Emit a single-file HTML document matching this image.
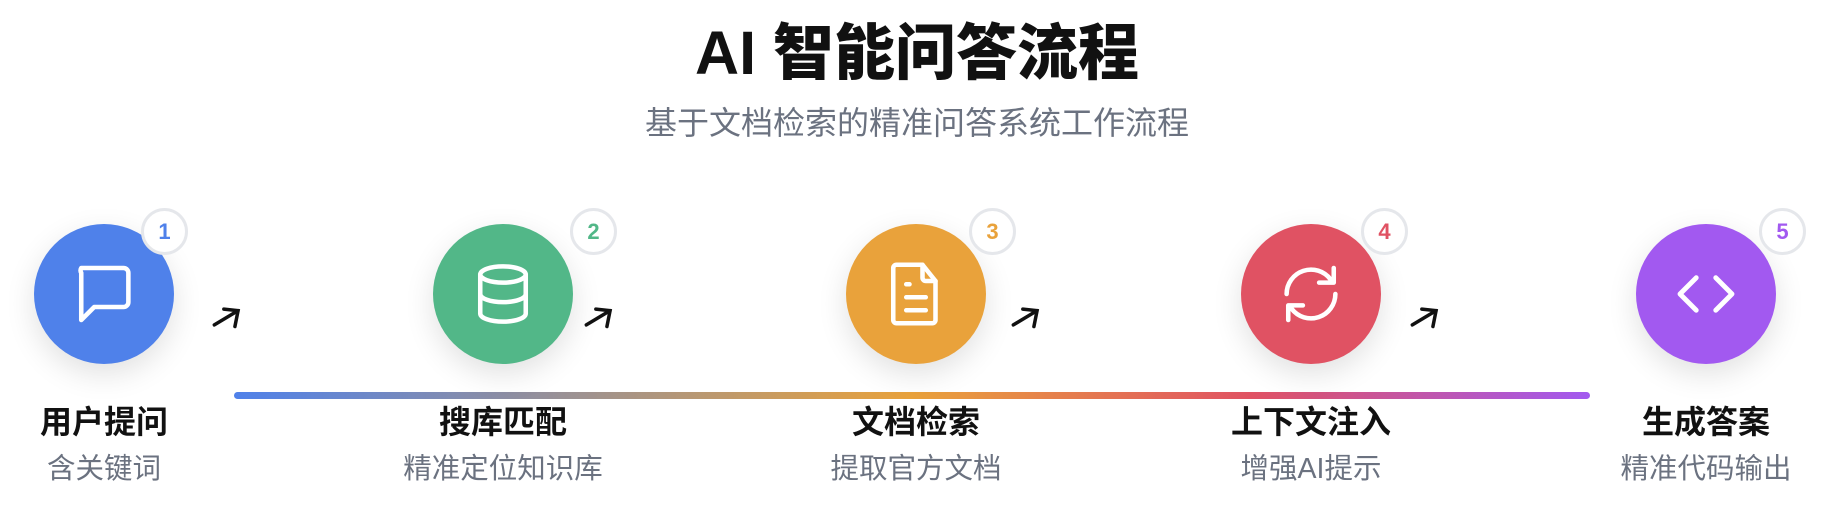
<!DOCTYPE html>
<html><head><meta charset="utf-8"><style>
body{margin:0;width:1834px;height:524px;background:#fff;position:relative;overflow:hidden;font-family:"Liberation Sans","Noto Sans CJK SC",sans-serif}
.t{position:absolute;left:0;width:1834px;text-align:center}
.c{position:absolute;width:140px;height:140px;border-radius:50%;top:224px;box-shadow:0 10px 30px rgba(0,0,0,.12);display:flex;align-items:center;justify-content:center}
.b{position:absolute;width:41px;height:41px;border-radius:50%;border:3px solid #e5e7eb;background:#fff;top:208px;font:900 22px "Liberation Sans",sans-serif;display:flex;align-items:center;justify-content:center}
.l{position:absolute;width:300px;text-align:center}
.l1{top:397px;font-size:32px;font-weight:bold;color:#111}
.l2{top:446px;font-size:28.5px;color:#6b7280}
.a{position:absolute;top:298px}
</style></head><body>
<div class="t" style="top:3px;font-size:61px;font-weight:900;color:#111">AI 智能问答流程</div>
<div class="t" style="top:98px;font-size:32px;color:#6b7280">基于文档检索的精准问答系统工作流程</div>
<div style="position:absolute;left:234px;top:392px;width:1356px;height:7px;border-radius:4px;background:linear-gradient(90deg,#4f81ea,#e9a23b 50%,#e05263 75%,#a259f0)"></div>

<div class="c" style="left:34px;background:#4f81ea"><svg width="78" height="78" viewBox="0 0 24 24" fill="none" stroke="#fff" stroke-width="1.4" stroke-linejoin="round"><path d="M5 4h13a1.5 1.5 0 0 1 1.5 1.5v9A1.5 1.5 0 0 1 18 16H9l-4 4V5.5A1.5 1.5 0 0 1 5 4z"/></svg></div>
<div class="b" style="left:141px;color:#4f81ea">1</div>
<div class="c" style="left:433px;background:#52b788"><svg width="78" height="78" viewBox="0 0 24 24" fill="none" stroke="#fff" stroke-width="1.4"><ellipse cx="12" cy="6" rx="7" ry="2.5"/><path d="M5 6v12c0 1.4 3.1 2.5 7 2.5s7-1.1 7-2.5V6M5 12c0 1.4 3.1 2.5 7 2.5s7-1.1 7-2.5"/></svg></div>
<div class="b" style="left:570px;color:#52b788">2</div>
<div class="c" style="left:846px;background:#e9a23b"><svg width="78" height="78" viewBox="0 0 24 24" fill="none" stroke="#fff" stroke-width="1.4" stroke-linecap="round" stroke-linejoin="round"><path d="M6 3h8l4 5v12a1 1 0 0 1-1 1H6a1 1 0 0 1-1-1V4a1 1 0 0 1 1-1z"/><path d="M14 3v4a1 1 0 0 0 1 1h3M9 9h1M9 13h6M9 17h6"/></svg></div>
<div class="b" style="left:969px;color:#e9a23b">3</div>
<div class="c" style="left:1241px;background:#e05263"><svg width="78" height="78" viewBox="0 0 24 24" fill="none" stroke="#fff" stroke-width="1.4" stroke-linecap="round" stroke-linejoin="round"><path d="M4.5 12a7.5 7.5 0 0 1 13.5-4.5M19 4v4.5h-4.5M19.5 12a7.5 7.5 0 0 1-13.5 4.5M5 20v-4.5h4.5"/></svg></div>
<div class="b" style="left:1361px;color:#e05263">4</div>
<div class="c" style="left:1636px;background:#a259f0"><svg width="78" height="78" viewBox="0 0 24 24" fill="none" stroke="#fff" stroke-width="1.5" stroke-linecap="round" stroke-linejoin="round"><path d="M9 7l-5 5 5 5M15 7l5 5-5 5"/></svg></div>
<div class="b" style="left:1759px;color:#a259f0">5</div>

<svg class="a" style="left:208px" width="38" height="38" viewBox="0 0 24 24" fill="none" stroke="#111" stroke-width="2.2" stroke-linecap="round"><path d="M4 17L19 8M10 7l9 1-2 10"/></svg>
<svg class="a" style="left:580px" width="38" height="38" viewBox="0 0 24 24" fill="none" stroke="#111" stroke-width="2.2" stroke-linecap="round"><path d="M4 17L19 8M10 7l9 1-2 10"/></svg>
<svg class="a" style="left:1007px" width="38" height="38" viewBox="0 0 24 24" fill="none" stroke="#111" stroke-width="2.2" stroke-linecap="round"><path d="M4 17L19 8M10 7l9 1-2 10"/></svg>
<svg class="a" style="left:1406px" width="38" height="38" viewBox="0 0 24 24" fill="none" stroke="#111" stroke-width="2.2" stroke-linecap="round"><path d="M4 17L19 8M10 7l9 1-2 10"/></svg>

<div class="l l1" style="left:-46px">用户提问</div><div class="l l2" style="left:-46px">含关键词</div>
<div class="l l1" style="left:353px">搜库匹配</div><div class="l l2" style="left:353px">精准定位知识库</div>
<div class="l l1" style="left:766px">文档检索</div><div class="l l2" style="left:766px">提取官方文档</div>
<div class="l l1" style="left:1161px">上下文注入</div><div class="l l2" style="left:1161px">增强AI提示</div>
<div class="l l1" style="left:1556px">生成答案</div><div class="l l2" style="left:1556px">精准代码输出</div>
</body></html>
